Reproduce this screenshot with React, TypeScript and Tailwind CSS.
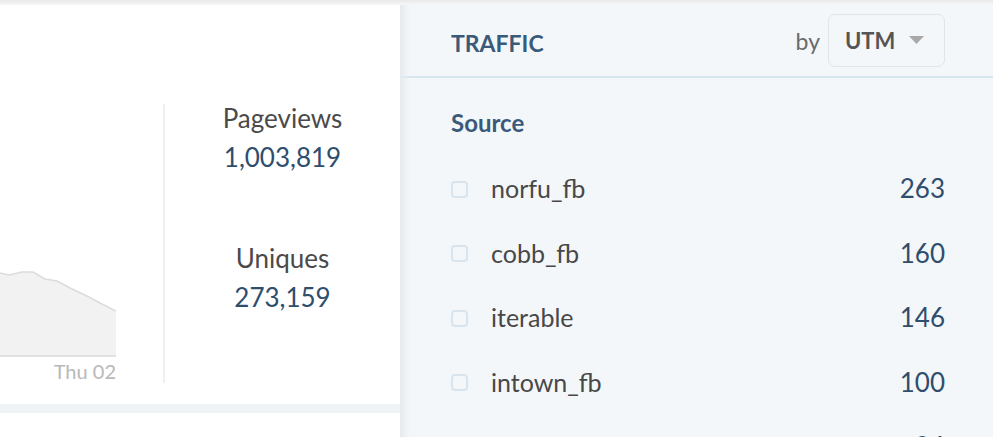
import React from "react";

const rows = [
  { name: "norfu_fb", value: "263" },
  { name: "cobb_fb", value: "160" },
  { name: "iterable", value: "146" },
  { name: "intown_fb", value: "100" },
  { name: "duluth_fb", value: "96" },
];

const pts = "0,268 9,270 22,267 33,267 45,274 57,276 70,283 85,290 100,298 116,306";

export default function App() {
  return (
    <div
      className="w-[993px] h-[437px] overflow-hidden bg-white flex flex-col"
      style={{ fontFamily: "Lato, 'Open Sans', sans-serif" }}
    >
      <div className="h-[5px] shrink-0 bg-gradient-to-b from-[#e9e9e9] to-[#f7f7f7]" />
      <div className="flex flex-1 min-h-0">
        {/* Left panel */}
        <div className="w-[400px] shrink-0 flex flex-col">
          <div className="h-[399px] flex">
            <div className="w-[163px] shrink-0 relative">
              <svg width="116" height="399" className="absolute left-0 top-0">
                <polygon points={`${pts} 116,351 0,351`} fill="#f2f2f2" />
                <polyline points={pts} fill="none" stroke="#dcdcdc" strokeWidth="1.5" />
                <line x1="0" y1="351" x2="116" y2="351" stroke="#e2e2e2" strokeWidth="2" />
              </svg>
              <div className="absolute left-0 w-[116px] text-right top-[354px] text-[20px] leading-[24px] text-[#b8b8b8]">
                Thu 02
              </div>
            </div>
            <div className="w-[2px] shrink-0 bg-[#f0f0f0] mt-[99px] h-[279px]" />
            <div className="flex-1 flex flex-col items-center pt-[97px]">
              <div className="text-[26px] leading-[32px] text-[#4a4a4a]">Pageviews</div>
              <div className="text-[26px] leading-[32px] text-[#2f4d6d] mt-[7px]">1,003,819</div>
              <div className="text-[26px] leading-[32px] text-[#4a4a4a] mt-[69px]">Uniques</div>
              <div className="text-[26px] leading-[32px] text-[#2f4d6d] mt-[7px]">273,159</div>
            </div>
          </div>
          <div className="h-[9px] bg-[#eef3f6]" />
        </div>
        {/* Right panel */}
        <div className="flex-1 bg-[#f3f7fa] relative flex flex-col">
          <div className="absolute left-0 top-0 bottom-0 w-[10px] bg-gradient-to-r from-[#e6eaee] to-transparent" />
          <div className="h-[73px] shrink-0 flex items-center justify-between pl-[51px] pr-[48px] pt-[4px] border-b-[2px] border-[#d7e5ee]">
            <div className="text-[23px] leading-[28px] font-bold text-[#3b5a7a]">TRAFFIC</div>
            <div className="flex items-center gap-[8px] -mt-[4px]">
              <span className="text-[23px] leading-[28px] text-[#6a6a6a]">by</span>
              <div className="w-[117px] h-[53px] rounded-[7px] border-[1.5px] border-[#e2e4e6] flex items-center pl-[16px] gap-[14px] bg-[#f4f7f9]">
                <span className="text-[22px] leading-[28px] font-bold text-[#555]">UTM</span>
                <svg width="15" height="9" viewBox="0 0 15 9">
                  <path d="M0 0 L15 0 L7.5 8 Z" fill="#a9a9a9" />
                </svg>
              </div>
            </div>
          </div>
          <div className="pl-[51px] pr-[48px]">
            <div className="text-[24px] font-bold text-[#3b5a7a] mt-[30px] leading-[30px]">Source</div>
            <div className="mt-[18px] flex flex-col">
              {rows.map((r) => (
                <div key={r.name} className="h-[64.5px] flex items-center">
                  <div className="w-[17px] h-[17px] rounded-[4px] border-2 border-[#d8e5ef] mr-[23px] mt-[2px]" />
                  <div className="flex-1 text-[25px] leading-[30px] text-[#484848]">{r.name}</div>
                  <div className="text-[26px] leading-[30px] text-[#2f4d6d]">{r.value}</div>
                </div>
              ))}
            </div>
          </div>
        </div>
      </div>
    </div>
  );
}
